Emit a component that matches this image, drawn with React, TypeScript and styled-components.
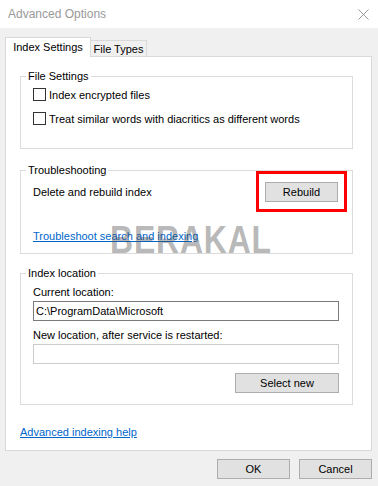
import React from 'react';
import styled, { createGlobalStyle } from 'styled-components';

const GlobalStyle = createGlobalStyle`
  html, body {
    margin: 0;
    padding: 0;
    background: #f0f0f0;
  }
  * {
    box-sizing: border-box;
  }
`;

const Window = styled.div`
  width: 378px;
  height: 486px;
  display: flex;
  flex-direction: column;
  font-family: "Liberation Sans", Arial, sans-serif;
  font-size: 11px;
  color: #000;
  background: #f0f0f0;
  overflow: hidden;
`;

const TitleBar = styled.div`
  height: 28px;
  flex: none;
  display: flex;
  align-items: center;
  justify-content: space-between;
  padding: 0 9px 0 8px;
  background: #fff;
`;

const Title = styled.span`
  font-size: 12px;
  color: #999;
`;

const Body = styled.div`
  flex: 1;
  display: flex;
  flex-direction: column;
  padding: 9px 6px 0 5px;
`;

const TabStrip = styled.div`
  display: flex;
  align-items: flex-end;
  height: 19px;
`;

const Tab = styled.div<{ $active?: boolean }>`
  display: flex;
  align-items: center;
  justify-content: center;
  border: 1px solid #d9d9d9;
  border-bottom: none;
  position: relative;
  z-index: ${p => (p.$active ? 1 : 0)};
  height: ${p => (p.$active ? '20px' : '16px')};
  margin-bottom: ${p => (p.$active ? '-1px' : '0')};
  width: ${p => (p.$active ? '86px' : '57px')};
  margin-left: ${p => (p.$active ? '0' : '-1px')};
  padding-bottom: ${p => (p.$active ? '1px' : '0')};
  background: ${p => (p.$active ? '#fff' : '#f0f0f0')};
`;

const Panel = styled.div`
  position: relative;
  height: 395px;
  background: #fff;
  border: 1px solid #d9d9d9;
  padding: 11px 0 0 14px;
`;

const GroupBox = styled.fieldset<{ $gap?: number }>`
  width: 333px;
  min-width: 0;
  margin: ${p => p.$gap ?? 0}px 0 0 0;
  padding: 0;
  border: 1px solid #dcdcdc;
`;

const Legend = styled.legend`
  margin-left: 5px;
  padding: 0 2px;
  line-height: 16px;
`;

const GroupContent = styled.div<{ $bottom: number }>`
  display: flex;
  flex-direction: column;
  padding: 0 13px ${p => p.$bottom}px 12px;
`;

const CheckRow = styled.label`
  display: flex;
  align-items: center;
  gap: 3px;
  height: 21px;
  & + & {
    margin-top: 3px;
  }
`;

const CheckBox = styled.span`
  width: 13px;
  height: 13px;
  border: 1px solid #333;
  background: #fff;
  flex: none;
`;

const SplitRow = styled.div`
  display: flex;
  align-items: center;
  justify-content: space-between;
  margin-top: 4px;
  height: 20px;
  padding-right: 1px;
`;

const Highlight = styled.div`
  position: relative;
  &::after {
    content: '';
    position: absolute;
    top: -11px;
    bottom: -10px;
    left: -9px;
    right: -9px;
    border: 3px solid #ff0000;
  }
`;

const Button = styled.button<{ $w: number }>`
  width: ${p => p.$w}px;
  height: 20px;
  padding: 0;
  background: #e1e1e1;
  border: 1px solid #adadad;
  font: inherit;
  color: #000;
`;

const Link = styled.a<{ $top: number }>`
  align-self: flex-start;
  margin-top: ${p => p.$top}px;
  line-height: 16px;
  color: #0066cc;
  text-decoration: underline;
  cursor: pointer;
`;

const FieldLabel = styled.div<{ $top: number }>`
  margin-top: ${p => p.$top}px;
  line-height: 16px;
`;

const TextField = styled.div<{ $disabled?: boolean }>`
  margin-top: 1px;
  height: 20px;
  display: flex;
  align-items: center;
  padding-left: 2px;
  border: 1px solid ${p => (p.$disabled ? '#cccccc' : '#7a7a7a')};
  background: #fff;
`;

const RightAlign = styled.div`
  display: flex;
  justify-content: flex-end;
  margin-top: 9px;
`;

const PanelLink = styled(Link)`
  display: inline-block;
`;

const Watermark = styled.div`
  position: absolute;
  left: 104px;
  top: 165px;
  font-size: 38px;
  line-height: 36px;
  font-weight: bold;
  color: rgba(70, 70, 70, 0.4);
  transform: scaleX(0.84);
  transform-origin: left top;
  pointer-events: none;
  letter-spacing: 1px;
`;

const Footer = styled.div`
  display: flex;
  justify-content: flex-end;
  gap: 9px;
  padding-top: 8px;
`;

const CloseIcon = () => (
  <svg width="11" height="11" viewBox="0 0 11 11">
    <path d="M0.5 0.5 L10.5 10.5 M10.5 0.5 L0.5 10.5" stroke="#999" strokeWidth="1" fill="none" />
  </svg>
);

const App: React.FC = () => {
  return (
    <>
      <GlobalStyle />
      <Window>
        <TitleBar>
          <Title>Advanced Options</Title>
          <CloseIcon />
        </TitleBar>
        <Body>
          <TabStrip>
            <Tab $active>Index Settings</Tab>
            <Tab>File Types</Tab>
          </TabStrip>
          <Panel>
            <GroupBox>
              <Legend>File Settings</Legend>
              <GroupContent $bottom={19}>
                <CheckRow>
                  <CheckBox />
                  Index encrypted files
                </CheckRow>
                <CheckRow>
                  <CheckBox />
                  Treat similar words with diacritics as different words
                </CheckRow>
              </GroupContent>
            </GroupBox>

            <GroupBox $gap={13}>
              <Legend>Troubleshooting</Legend>
              <GroupContent $bottom={9}>
                <SplitRow>
                  <span>Delete and rebuild index</span>
                  <Highlight>
                    <Button $w={73}>Rebuild</Button>
                  </Highlight>
                </SplitRow>
                <Link $top={26}>Troubleshoot search and indexing</Link>
              </GroupContent>
            </GroupBox>

            <GroupBox $gap={11}>
              <Legend>Index location</Legend>
              <GroupContent $bottom={11}>
                <FieldLabel $top={3}>Current location:</FieldLabel>
                <TextField>C:\ProgramData\Microsoft</TextField>
                <FieldLabel $top={6}>New location, after service is restarted:</FieldLabel>
                <TextField $disabled />
                <RightAlign>
                  <Button $w={104}>Select new</Button>
                </RightAlign>
              </GroupContent>
            </GroupBox>

            <PanelLink $top={19}>Advanced indexing help</PanelLink>
            <Watermark>BERAKAL</Watermark>
          </Panel>
          <Footer>
            <Button $w={73}>OK</Button>
            <Button $w={73}>Cancel</Button>
          </Footer>
        </Body>
      </Window>
    </>
  );
};

export default App;
